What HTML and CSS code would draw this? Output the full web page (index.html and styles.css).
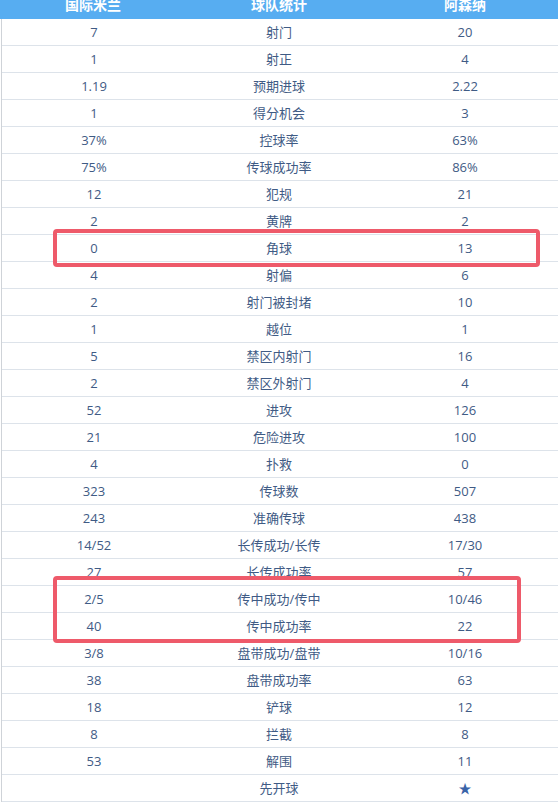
FILE: index.html
```html
<!DOCTYPE html>
<html lang="zh">
<head>
<meta charset="utf-8">
<link rel="stylesheet" href="styles.css">
</head>
<body>
<div class="stats">
  <div class="head">
    <div class="hc">国际米兰</div><div class="hc">球队统计</div><div class="hc">阿森纳</div>
  </div>
  <div class="body">
    <div class="row"><span>7</span><span>射门</span><span>20</span></div>
    <div class="row"><span>1</span><span>射正</span><span>4</span></div>
    <div class="row"><span>1.19</span><span>预期进球</span><span>2.22</span></div>
    <div class="row"><span>1</span><span>得分机会</span><span>3</span></div>
    <div class="row"><span>37%</span><span>控球率</span><span>63%</span></div>
    <div class="row"><span>75%</span><span>传球成功率</span><span>86%</span></div>
    <div class="row"><span>12</span><span>犯规</span><span>21</span></div>
    <div class="row"><span>2</span><span>黄牌</span><span>2</span></div>
    <div class="row"><span>0</span><span>角球</span><span>13</span><div class="mark mark1"></div></div>
    <div class="row"><span>4</span><span>射偏</span><span>6</span></div>
    <div class="row"><span>2</span><span>射门被封堵</span><span>10</span></div>
    <div class="row"><span>1</span><span>越位</span><span>1</span></div>
    <div class="row"><span>5</span><span>禁区内射门</span><span>16</span></div>
    <div class="row"><span>2</span><span>禁区外射门</span><span>4</span></div>
    <div class="row"><span>52</span><span>进攻</span><span>126</span></div>
    <div class="row"><span>21</span><span>危险进攻</span><span>100</span></div>
    <div class="row"><span>4</span><span>扑救</span><span>0</span></div>
    <div class="row"><span>323</span><span>传球数</span><span>507</span></div>
    <div class="row"><span>243</span><span>准确传球</span><span>438</span></div>
    <div class="row"><span>14/52</span><span>长传成功/长传</span><span>17/30</span></div>
    <div class="row"><span>27</span><span>长传成功率</span><span>57</span></div>
    <div class="row"><span>2/5</span><span>传中成功/传中</span><span>10/46</span><div class="mark mark2"></div></div>
    <div class="row"><span>40</span><span>传中成功率</span><span>22</span></div>
    <div class="row"><span>3/8</span><span>盘带成功/盘带</span><span>10/16</span></div>
    <div class="row"><span>38</span><span>盘带成功率</span><span>63</span></div>
    <div class="row"><span>18</span><span>铲球</span><span>12</span></div>
    <div class="row"><span>8</span><span>拦截</span><span>8</span></div>
    <div class="row"><span>53</span><span>解围</span><span>11</span></div>
    <div class="row"><span></span><span>先开球</span><span class="star">★</span></div>
  </div>
</div>
</body>
</html>
```
FILE: styles.css
```css
html, body {
  margin: 0;
  padding: 0;
  background: #fff;
}
body {
  font-family: "Open Sans", "Noto Sans CJK SC", sans-serif;
  font-size: 13px;
  color: #3f5b85;
}
.stats {
  width: 558px;
}
.head {
  height: 19px;
  overflow: hidden;
  background: #57adf1;
  display: grid;
  grid-template-columns: 186px 186px 186px;
}
.hc {
  text-align: center;
  color: #fff;
  font-weight: bold;
  font-size: 14px;
  line-height: 14px;
  margin-top: -3px;
  font-family: "Noto Sans CJK SC", sans-serif;
}
.body {
  margin-left: 1px;
  border-left: 1px solid #cfd3d8;
}
.row {
  position: relative;
  display: grid;
  grid-template-columns: 184px 186px 186px;
  height: 26px;
  line-height: 26px;
  border-bottom: 1px solid #dde3ea;
}
.row span {
  text-align: center;
}
.star {
  font-size: 13px;
  color: #3a63a8;
}
.mark {
  position: absolute;
  border: 4px solid #ee5a6a;
  border-radius: 4px;
  box-sizing: border-box;
  pointer-events: none;
  z-index: 2;
}
.mark1 {
  left: 51px;
  top: -6px;
  width: 487px;
  height: 38px;
}
.mark2 {
  left: 51px;
  top: -10px;
  width: 468px;
  height: 67px;
}
```
